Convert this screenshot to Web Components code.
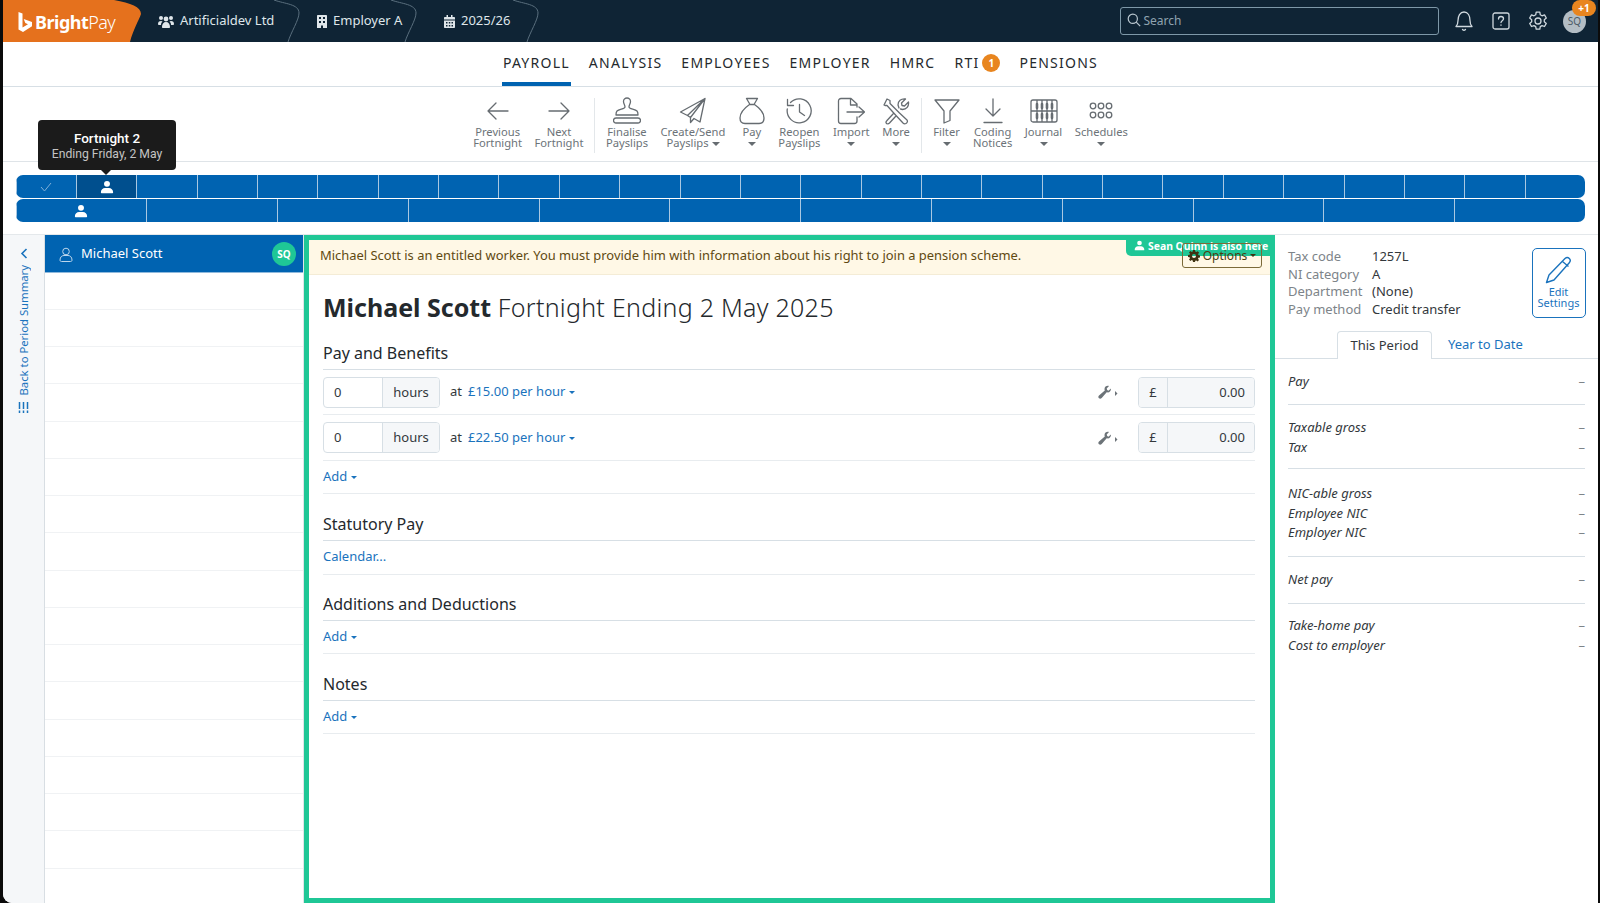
<!DOCTYPE html>
<html lang="en">
<head>
<meta charset="utf-8">
<title>BrightPay</title>
<style>
  html, body { margin: 0; height: 100%; background: #0b0b0b; overflow: hidden; }
  body { font: 13px/1.35 "Noto Sans", "Open Sans", sans-serif; color: #24292d; }
</style>
</head>
<body>

<bp-app>
  <bp-topbar></bp-topbar>
  <bp-nav>
    <bp-nav-item active>PAYROLL</bp-nav-item>
    <bp-nav-item>ANALYSIS</bp-nav-item>
    <bp-nav-item>EMPLOYEES</bp-nav-item>
    <bp-nav-item>EMPLOYER</bp-nav-item>
    <bp-nav-item>HMRC</bp-nav-item>
    <bp-nav-item>RTI<span slot="badge">1</span></bp-nav-item>
    <bp-nav-item>PENSIONS</bp-nav-item>
  </bp-nav>
  <bp-toolbar>
    <bp-tool><svg slot="icon" width="28" height="28" viewBox="0 0 28 28"><path d="M24 14H4M12 6l-8 8 8 8"/></svg>Previous<br>Fortnight</bp-tool>
    <bp-tool><svg slot="icon" width="28" height="28" viewBox="0 0 28 28"><path d="M4 14h20M16 6l8 8-8 8"/></svg>Next<br>Fortnight</bp-tool>
    <bp-tool-sep></bp-tool-sep>
    <bp-tool><svg slot="icon" width="28" height="28" viewBox="0 0 28 28"><path d="M10.500 4.500a3.500 3.500 0 0 1 7 0c0 2.500-1.500 3.500-1.500 5.500 0 2 6 2 8 4 1 1 1 3 1 4H3c0-1 0-3 1-4 2-2 8-2 8-4 0-2-1.500-3-1.500-5.500zM3 21h22a1.500 1.500 0 0 1 0 5H3a1.500 1.500 0 0 1 0-5z"/></svg>Finalise<br>Payslips</bp-tool>
    <bp-tool><svg slot="icon" width="28" height="28" viewBox="0 0 28 28"><path d="M26 1.500 1.500 15l7 3.500L26 1.500 11.500 20.500v5l3.500-4 6 3.500zM8.500 18.500l3 2"/></svg>Create/Send<br>Payslips<bp-caret inline></bp-caret></bp-tool>
    <bp-tool caret><svg slot="icon" width="28" height="28" viewBox="0 0 28 28"><path d="M8.500 1.500h11L16 7.500h-4zM11.500 7.500C6.500 11 2 16 2 21c0 3.500 2 5.500 5 5.500h14c3 0 5-2 5-5.500 0-5-4.500-10-9.500-13.500"/></svg>Pay</bp-tool>
    <bp-tool><svg slot="icon" width="28" height="28" viewBox="0 0 28 28"><path d="M5.500 5.500A12 12 0 1 1 2.300 12M2.500 2.500v6h6M14.500 7.500V15l5 3.500"/></svg>Reopen<br>Payslips</bp-tool>
    <bp-tool caret><svg slot="icon" width="28" height="28" viewBox="0 0 28 28"><path d="M20 10V7l-6-5.500H4A2.500 2.500 0 0 0 1.500 4v20A2.500 2.500 0 0 0 4 26.500h13.500A2.500 2.500 0 0 0 20 24v-4M13.500 1.500V8H20M10 15h17M22 10l5.500 5-5.500 5"/></svg>Import</bp-tool>
    <bp-tool caret><svg slot="icon" width="28" height="28" viewBox="0 0 28 28"><path d="M2 8 5 2l3 1.500v3l9.500 9.500 7.500 7c1 1.500 0 3-1 3.500-1 .5-2 .5-3-.5l-7-7.500L5 8.500H3zM11 17l-6 6.500c-1.500 1.500-1 2.500-.5 3M4.500 26.500c1 .5 2 .5 3-.5l6-6.500M17 11l-1-3c0-4 3-6.500 7.500-6L19.500 6l.5 2.500 2.500.5 4-4c.5 4.500-2 7.500-6 7.500l-2-.5"/></svg>More</bp-tool>
    <bp-tool-sep></bp-tool-sep>
    <bp-tool caret><svg slot="icon" width="28" height="28" viewBox="0 0 28 28"><path d="M2 3h24L17 14v9.500L11 26V14z"/></svg>Filter</bp-tool>
    <bp-tool><svg slot="icon" width="28" height="28" viewBox="0 0 28 28"><path d="M14 2v17M7 12l7 7 7-7M5 25.500h18"/></svg>Coding<br>Notices</bp-tool>
    <bp-tool caret><svg slot="icon" width="28" height="28" viewBox="0 0 28 28"><path d="M3 3h22a2 2 0 0 1 2 2v18a2 2 0 0 1-2 2H3a2 2 0 0 1-2-2V5a2 2 0 0 1 2-2zM1 14h26M7 3v22M12 3v22M17 3v22M22 3v22"/><path d="M7 7v4M12 7v4M17 7v4M22 7v4M7 17v4M12 17v4M17 17v4M22 17v4" stroke-width="2.600"/></svg>Journal</bp-tool>
    <bp-tool caret><svg slot="icon" width="28" height="28" viewBox="0 0 28 28"><circle cx="6" cy="9" r="2.800"/><circle cx="14" cy="9" r="2.800"/><circle cx="22" cy="9" r="2.800"/><circle cx="6" cy="18" r="2.800"/><circle cx="14" cy="18" r="2.800"/><circle cx="22" cy="18" r="2.800"/></svg>Schedules</bp-tool>
  </bp-toolbar>
  <bp-periods>
    <bp-period-row count="26" done="0" current="1"></bp-period-row>
    <bp-period-row count="12" person="0"></bp-period-row>
    <bp-tooltip><b>Fortnight 2</b><br>Ending Friday, 2 May</bp-tooltip>
  </bp-periods>
  <bp-main>
    <bp-back></bp-back>
    <bp-list></bp-list>
    <bp-content>
      <bp-alert>Michael Scott is an entitled worker. You must provide him with information about his right to join a pension scheme.</bp-alert>
      <bp-title><b>Michael Scott</b> Fortnight Ending 2 May 2025</bp-title>
      <bp-section style="--pb:10.1px">
        <span slot="title">Pay and Benefits</span>
        <bp-pay-row>£15.00 per hour</bp-pay-row>
        <bp-pay-row>£22.50 per hour</bp-pay-row>
        <bp-action>Add<bp-caret small></bp-caret></bp-action>
      </bp-section>
      <bp-section>
        <span slot="title">Statutory Pay</span>
        <bp-action>Calendar...</bp-action>
      </bp-section>
      <bp-section>
        <span slot="title">Additions and Deductions</span>
        <bp-action>Add<bp-caret small></bp-caret></bp-action>
      </bp-section>
      <bp-section>
        <span slot="title">Notes</span>
        <bp-action>Add<bp-caret small></bp-caret></bp-action>
      </bp-section>
    </bp-content>
    <bp-side>
      <bp-meta></bp-meta>
      <bp-tabs></bp-tabs>
      <bp-totals style="--pt:13px;--pb:12.3px">
        <span>Pay</span>
      </bp-totals>
      <bp-totals style="--pb:10.4px">
        <span>Taxable gross</span>
        <span>Tax</span>
      </bp-totals>
      <bp-totals style="--pt:14.7px;--pb:12.5px">
        <span>NIC-able gross</span>
        <span>Employee NIC</span>
        <span>Employer NIC</span>
      </bp-totals>
      <bp-totals style="--pb:13.5px">
        <span>Net pay</span>
      </bp-totals>
      <bp-totals last style="--pt:12px">
        <span>Take-home pay</span>
        <span>Cost to employer</span>
      </bp-totals>
    </bp-side>
  </bp-main>
</bp-app>

<script>
const USER_ICON = '<path d="M8 1a3.400 3.400 0 1 1 0 6.800A3.400 3.400 0 0 1 8 1zM1.800 15c-.6 0-.8-.4-.8-1 0-3 2.300-5 4.800-5h4.400c2.500 0 4.800 2 4.800 5 0 .6-.2 1-.8 1z"/>';
const CHEVRON = '<svg class="chev" width="28" height="42" viewBox="0 0 28 42"><path d="M1 0C12 4 26 4 26 13C26 20 18 32 15 42" fill="none" stroke="#5a6f7e"/></svg>';

function component(name, html) {
  customElements.define(name, class extends HTMLElement {
    constructor() {
      super();
      this.attachShadow({ mode: 'open' });
      this.shadowRoot.innerHTML = html;
    }
  });
}

component('bp-app', `
  <style>
    :host { display: flex; flex-direction: column; height: 903px; margin: 0 2px 0 3px; background: #fff;
            border-radius: 0 0 0 9px; overflow: hidden; }
  </style>
  <slot></slot>
`);

component('bp-topbar', `
  <style>
    :host { display: flex; align-items: center; height: 42px; flex: none; background: #0f2435; color: #dfe6ea; position: relative; }
    .logo { width: 138px; height: 42px; flex: none; position: relative; }
    .logo svg { position: absolute; left: 0; top: 0; }
    .word { position: absolute; left: 32px; top: 9px; font: 700 18px/27px "Noto Sans", sans-serif; color: #fff; letter-spacing: -.5px; }
    .word i { font-style: normal; font-weight: 300; letter-spacing: -.6px; }
    .crumb { display: flex; align-items: center; gap: 6px; height: 42px; position: relative; font-size: 13px; box-sizing: border-box; flex: none; }
    .crumb svg.chev { position: absolute; top: 0; right: 0; }
    .crumb svg.ic { fill: #dfe6ea; flex: none; }
    .c1 { width: 160px; padding-left: 17px; }
    .c2 { width: 117px; padding-left: 16px; }
    .c3 { width: 122px; padding-left: 26px; }
    .tail { flex: 1; }
    .search { width: 319px; height: 28px; box-sizing: border-box; border: 1px solid #7e98a8; border-radius: 3px;
              display: flex; align-items: center; gap: 3px; padding: 0 6px; color: #8fa3b0; font-size: 12px; margin-right: 15px; }
    .search svg { margin-top: -2px; }
    .tools { display: flex; align-items: center; gap: 18px; margin-right: 12px; }
    .tools svg { fill: none; stroke: #cfd8de; stroke-width: 1.300; stroke-linecap: round; stroke-linejoin: round; display: block; }
    .avatar { width: 23px; height: 23px; border-radius: 50%; background: #b3bdc4; color: #4b5a66; font-size: 10px; line-height: 23px;
              text-align: center; position: relative; margin-left: -2.500px; margin-top: 1px; }
    .plus { position: absolute; left: 9px; top: -10px; width: 24px; height: 16px; border-radius: 8px; background: #e8851f; color: #fff;
            font: 700 10px/16px "Noto Sans", sans-serif; }
  </style>
  <div class="logo">
    <svg width="138" height="42" viewBox="0 0 138 42">
      <path d="M0 0H111C128 3 138 7 138 14C136 20 130 30 127 42H0z" fill="#e5711d"/>
      <path d="M15.500 12l4 1.400v14.100l5.500-3.200-2.700-1.300-1.600-4 8.300 2.900v4.300L20 32l-4.500-2.500z" fill="#fff"/>
    </svg>
    <span class="word">Bright<i>Pay</i></span>
  </div>
  <div class="crumb c1">
    <svg class="ic" width="16" height="13" viewBox="0 0 16 13"><circle cx="3" cy="3" r="2"/><circle cx="13" cy="3" r="2"/><circle cx="8" cy="4" r="2.400"/><path d="M0 9c0-2 1-3 3-3 .8 0 1.200.2 1.500.6C3.500 7.500 3 8.500 3 10H.8C.3 10 0 9.600 0 9zM16 9c0-2-1-3-3-3-.8 0-1.200.2-1.500.6 1 .9 1.500 1.900 1.500 3.400h2.200c.5 0 .8-.4.8-1zM4 12c0-3 1.500-5 4-5s4 2 4 5c0 .6-.4 1-1 1H5c-.6 0-1-.4-1-1z"/></svg>
    <span>Artificialdev Ltd</span>
    ${CHEVRON}
  </div>
  <div class="crumb c2">
    <svg class="ic" width="10" height="13" viewBox="0 0 10 13"><path d="M0 1c0-.6.400-1 1-1h8c.6 0 1 .4 1 1v12H6v-2.500H4V13H0zM2 2v2h2V2zM6 2v2h2V2zM2 6v2h2V6zM6 6v2h2V6z" fill-rule="evenodd"/></svg>
    <span>Employer A</span>
    ${CHEVRON}
  </div>
  <div class="crumb c3">
    <svg class="ic" width="11" height="13" viewBox="0 0 11 13"><path d="M0 3c0-.6.400-1 1-1h1.500V0h1.500v2h3V0h1.500v2H10c.6 0 1 .4 1 1v1.500H0zM0 5.500h11V12c0 .6-.4 1-1 1H1c-.6 0-1-.4-1-1zM2 7v1.500h1.500V7zM4.800 7v1.500h1.500V7zM7.500 7v1.500H9V7zM2 10v1.500h1.500V10zM4.800 10v1.500h1.500V10zM7.500 10v1.500H9V10z" fill-rule="evenodd"/></svg>
    <span>2025/26</span>
    ${CHEVRON}
  </div>
  <div class="tail"></div>
  <div class="search">
    <svg width="14" height="14" viewBox="0 0 14 14" fill="none" stroke="#b9c6cf" stroke-width="1.200"><circle cx="5.800" cy="5.800" r="4.600"/><path d="m9.200 9.200 4 4"/></svg>
    <span>Search</span>
  </div>
  <div class="tools">
    <svg width="20" height="22" viewBox="0 0 20 22"><path d="M2 16.500c1.500-1.500 2-3 2-6C4 6 6 2 10 2s6 4 6 8.500c0 3 .5 4.500 2 6zM8.500 19.500c.8.800 2.200.8 3 0"/></svg>
    <svg width="18" height="18" viewBox="0 0 18 18"><rect x="1" y="1" width="16" height="16" rx="2"/><path d="M6.500 7c0-1.700 1.100-2.500 2.500-2.500s2.500.9 2.500 2.200c0 2-2.500 2-2.500 3.800M9 13v.3"/></svg>
    <svg width="20" height="20" viewBox="0 0 20 20"><path d="M8.200 1.200h3.600l.5 2.600 1.700 1 2.500-.9 1.800 3.100-2 1.700v2l2 1.700-1.800 3.100-2.500-.9-1.700 1-.5 2.600H8.200l-.5-2.600-1.700-1-2.500.9-1.800-3.100 2-1.700v-2l-2-1.700 1.800-3.100 2.500.9 1.700-1z"/><circle cx="10" cy="10" r="3"/></svg>
    <div class="avatar">SQ<div class="plus">+1</div></div>
  </div>
`);

component('bp-nav', `
  <style>
    :host { display: flex; justify-content: center; gap: 17px; height: 45px; flex: none; box-sizing: border-box;
            border-bottom: 1px solid #d7dfe5; }
  </style>
  <slot></slot>
`);

component('bp-nav-item', `
  <style>
    :host { display: flex; align-items: center; gap: 3px; height: 44px; box-sizing: border-box; font-size: 14px; letter-spacing: 1.250px;
            color: #24292d; padding: 0 1px 2px; }
    :host([active]) { border-bottom: 4px solid #0063b1; padding: 2px 1px 0; }
    ::slotted([slot=badge]) { width: 18px; height: 18px; border-radius: 50%; background: #e8851f; color: #fff; font: 700 10px/18px "Noto Sans", sans-serif;
            letter-spacing: 0; text-align: center; }
  </style>
  <slot></slot><slot name="badge"></slot>
`);

component('bp-toolbar', `
  <style>
    :host { display: flex; justify-content: center; height: 75px; flex: none; box-sizing: border-box; border-bottom: 1px solid #dfe4e8; padding-top: 10px; }
  </style>
  <slot></slot>
`);

component('bp-tool', `
  <style>
    :host { display: flex; flex-direction: column; align-items: center; padding: 0 6.250px; text-align: center; color: #6c7378;
            font-size: 11.200px; line-height: 11px; }
    .icon { height: 29px; }
    ::slotted(svg) { display: block; fill: none; stroke: #666c71; stroke-width: 1.300; stroke-linecap: round; stroke-linejoin: round; }
    .caret { display: none; margin-top: 5px; width: 0; height: 0; border: 4px solid transparent; border-top-color: #666c71; border-bottom: 0; }
    :host([caret]) .caret { display: block; }
  </style>
  <div class="icon"><slot name="icon"></slot></div>
  <div><slot></slot></div>
  <div class="caret"></div>
`);

component('bp-tool-sep', `
  <style>
    :host { display: block; width: 1px; height: 55px; background: #e3e7ea; margin: 1px 4.500px 0; flex: none; }
  </style>
`);

component('bp-caret', `
  <style>
    :host { display: inline-block; vertical-align: middle; margin-left: 3px; width: 0; height: 0; border: 4px solid transparent;
            border-top-color: #666c71; border-bottom: 0; }
    :host([small]) { border-width: 3px; border-bottom: 0; border-top-color: #1a73bd; margin-left: 4px; }
  </style>
`);

component('bp-periods', `
  <style>
    :host { display: flex; flex-direction: column; gap: 1px; height: 73px; flex: none; box-sizing: border-box; padding: 13px 13px 0 12.500px;
            border-bottom: 1px solid #e4e8eb; position: relative; }
  </style>
  <slot></slot>
`);

customElements.define('bp-period-row', class extends HTMLElement {
  constructor() {
    super();
    this.attachShadow({ mode: 'open' });
  }
  connectedCallback() {
    const count = +this.getAttribute('count');
    let cells = '';
    for (let i = 0; i < count; i++) {
      let cls = '', inner = '';
      if (this.getAttribute('done') == i) inner = '<svg width="12" height="10" viewBox="0 0 12 10" fill="none" stroke="#7fb0d8" stroke-width="1"><path d="m1 5 3.500 4L11 1"/></svg>';
      if (this.getAttribute('current') == i) { cls = 'cur'; inner = `<svg width="14" height="14" viewBox="0 0 16 16" fill="#fff">${USER_ICON}</svg>`; }
      if (this.getAttribute('person') == i) inner = `<svg width="14" height="14" viewBox="0 0 16 16" fill="#fff">${USER_ICON}</svg>`;
      cells += `<div class="${cls}">${inner}</div>`;
    }
    this.shadowRoot.innerHTML = `
      <style>
        :host { display: grid; grid-template-columns: repeat(${count}, 1fr); height: 23px; background: #0063b1; border-radius: 7px; overflow: hidden; }
        div { display: flex; align-items: center; justify-content: center; border-left: 1px solid #a9c8e2; }
        div:first-child { border-left: 0; }
        .cur { background: #004f8e; }
      </style>${cells}`;
  }
});

component('bp-tooltip', `
  <style>
    :host { position: absolute; left: 35px; top: -42px; width: 138px; height: 50px; box-sizing: border-box; background: #1b1b1b; border-radius: 4px;
            color: #c4c4c4; font: 12.200px/14.500px Roboto, sans-serif; text-align: center; padding-top: 11px; z-index: 3; }
    ::slotted(b) { color: #fff; font-size: 13.500px; font-weight: 500; }
    .arrow { position: absolute; left: 63px; bottom: -5px; width: 0; height: 0; border: 5px solid transparent; border-top-color: #1b1b1b; border-bottom: 0; }
  </style>
  <slot></slot><div class="arrow"></div>
`);

component('bp-main', `
  <style>
    :host { display: flex; flex: 1; min-height: 0; }
  </style>
  <slot></slot>
`);

component('bp-back', `
  <style>
    :host { width: 42px; flex: none; box-sizing: border-box; background: #f5f7f9; border-right: 1px solid #d8dee3; color: #1a73bd;
            display: flex; flex-direction: column; align-items: center; padding: 13px 1px 0 1px; font-size: 11.300px; line-height: 14px; }
    span { writing-mode: vertical-rl; transform: rotate(180deg); margin-top: 6px; white-space: nowrap; }
    svg { display: block; flex: none; }
  </style>
  <svg width="8" height="11" viewBox="0 0 8 11" fill="none" stroke="#1a73bd" stroke-width="1.600"><path d="M6.500 1 2 5.500 6.500 10"/></svg>
  <span>Back to Period Summary</span>
  <svg style="margin-top:6px" width="11" height="11" viewBox="0 0 11 11" fill="none" stroke="#1a73bd" stroke-width="1.500"><path d="M1.500 0v7M5.500 0v7M9.500 0v7M1.500 8.500V11M5.500 8.500V11M9.500 8.500V11"/></svg>
`);

customElements.define('bp-list', class extends HTMLElement {
  constructor() {
    super();
    this.attachShadow({ mode: 'open' });
    let rows = '';
    for (let i = 0; i < 17; i++) rows += '<div class="row"></div>';
    this.shadowRoot.innerHTML = `
      <style>
        :host { width: 259px; flex: none; border-right: 1px solid #dfe4e8; overflow: hidden; box-sizing: border-box; }
        .sel { height: 37.500px; background: #0063b1; color: #fff; display: flex; align-items: center; box-sizing: border-box; padding: 2px 7px 0 14px;
               border-bottom: 1px solid #8fb9dc; font-size: 13px; }
        .sel svg { margin-right: 8px; fill: none; stroke: #bcd6ec; stroke-width: 1; }
        .sel span { flex: 1; }
        .sel b { width: 24px; height: 24px; border-radius: 50%; background: #1fc796; font-size: 10px; line-height: 24px; text-align: center; }
        .row { height: 37.270px; box-sizing: border-box; border-bottom: 1px solid #f0f2f4; }
      </style>
      <div class="sel">
        <svg width="14" height="15" viewBox="0 0 14 15"><circle cx="7" cy="4.500" r="3.300"/><path d="M1 13c0-3 2-4.500 4-4.500h4c2 0 4 1.500 4 4.500 0 1-.5 1.500-1.500 1.500h-9C1.500 14.500 1 14 1 13z"/></svg>
        <span>Michael Scott</span><b>SQ</b>
      </div>${rows}`;
  }
});

component('bp-content', `
  <style>
    :host { width: 971px; flex: none; box-sizing: border-box; border: 5px solid #1fc796; position: relative; display: block; }
  </style>
  <slot></slot>
`);

component('bp-alert', `
  <style>
    :host { display: flex; align-items: center; height: 35px; box-sizing: border-box; background: #fff8e6; color: #5f4a12; padding: 0 9px 2px 11px; font-size: 12.930px;
            border-bottom: 1px solid #f4ecd6; }
    .badge { position: absolute; right: -5px; top: -5px; width: 149px; height: 21px; box-sizing: border-box; background: #1fc796; color: #fff; border-radius: 0 0 0 5px;
             font: 700 10.400px/14px "Noto Sans", sans-serif; padding: 4px 0 0 8px; display: flex; align-items: flex-start; gap: 3px; white-space: nowrap; z-index: 1; }
    .badge svg { fill: #fff; margin-top: 1px; flex: none; }
    .opt { position: absolute; right: 8px; top: 3px; width: 80px; height: 25px; box-sizing: border-box; border: 1px solid #7b6a38; border-radius: 3px; color: #4b3c10;
           font-size: 12px; line-height: 22px; display: flex; align-items: center; justify-content: center; gap: 3px; z-index: 2; }
    .opt svg { fill: #3f3312; }
    .opt i { width: 0; height: 0; border: 3px solid transparent; border-top-color: #3f3312; border-bottom: 0; }
  </style>
  <slot></slot>
  <div class="badge"><svg width="11" height="11" viewBox="0 0 16 16">${USER_ICON}</svg><span>Sean Quinn is also here</span></div>
  <div class="opt">
    <svg width="12" height="12" viewBox="0 0 12 12"><path d="M5 0h2l.3 1.600 1 .5L9.800 1.300l1.300 1.500-1 1.300.3 1 1.600.3v2l-1.600.3-.4 1 1 1.300-1.400 1.400-1.300-1-1 .4L7 12H5l-.3-1.600-1-.4-1.300 1L1 9.500l1-1.300-.4-1L0 7V5l1.600-.3.4-1L1 2.400 2.400 1l1.300 1 1-.4zM6 4a2 2 0 1 0 0 4 2 2 0 0 0 0-4z" fill-rule="evenodd"/></svg>
    <span>Options</span><i></i>
  </div>
`);

component('bp-title', `
  <style>
    :host { display: block; padding: 13px 14px 0; height: 58px; box-sizing: border-box; font-size: 25px; line-height: 38px; color: #24292d; font-weight: 300; letter-spacing: .27px; }
    ::slotted(b) { font-weight: 700; letter-spacing: 0; }
  </style>
  <slot></slot>
`);

component('bp-section', `
  <style>
    :host { display: block; margin: 0 15px 0 14px; padding-bottom: var(--pb, 9.100px); }
    .title { font-size: 16px; line-height: 22px; padding: 9px 0 5px; border-bottom: 1px solid #d7dfe5; color: #24292d; }
  </style>
  <div class="title"><slot name="title"></slot></div>
  <slot></slot>
`);

component('bp-pay-row', `
  <style>
    :host { display: flex; align-items: center; height: 45.400px; box-sizing: border-box; border-bottom: 1px solid #e8ecef; color: #1a73bd; }
    .group { display: flex; height: 31px; box-sizing: border-box; border: 1px solid #d7dfe5; border-radius: 4px; overflow: hidden; color: #33383c; line-height: 29px; }
    .val { width: 59px; padding-left: 10px; box-sizing: border-box; border-right: 1px solid #d7dfe5; }
    .add { width: 56px; text-align: center; background: #f5f7f9; }
    .at { color: #33383c; margin: 0 6px 0 10px; }
    i { display: inline-block; vertical-align: middle; margin-left: 4px; width: 0; height: 0; border: 3px solid transparent; border-top-color: #1a73bd; border-bottom: 0; }
    .fill { flex: 1; }
    svg { fill: #6c7378; margin-right: 20px; flex: none; }
    .pound { width: 28px; text-align: center; background: #f5f7f9; border-right: 1px solid #d7dfe5; }
    .amt { width: 86px; text-align: right; padding-right: 9px; box-sizing: border-box; background: #f5f7f9; }
  </style>
  <div class="group"><div class="val">0</div><div class="add">hours</div></div>
  <span class="at">at</span>
  <span><slot></slot><i></i></span>
  <div class="fill"></div>
  <svg width="20" height="14" viewBox="0 0 20 14"><path d="M13 3.500 10.400 5.800 9.200 5l-.5-1.500L11 1c-2.300-.6-4.300.6-4.500 3 0 .6.100 1 .3 1.500L1 10.600c-1 1-.7 2.100 0 2.700.8.700 1.800.7 2.700-.3l5-5.700c2.400.7 4.500-1.200 4.300-3.800z"/><path d="m17 6 2.500 2.500L17 11z"/></svg>
  <div class="group"><div class="pound">£</div><div class="amt">0.00</div></div>
`);

component('bp-action', `
  <style>
    :host { display: block; height: 33.500px; box-sizing: border-box; border-bottom: 1px solid #e8ecef; color: #1a73bd; line-height: 31px; }
  </style>
  <slot></slot>
`);

component('bp-side', `
  <style>
    :host { flex: 1; min-width: 0; display: block; }
  </style>
  <slot></slot>
`);

component('bp-meta', `
  <style>
    :host { display: flex; justify-content: space-between; padding: 13px 12.500px 0 13px; height: 96px; box-sizing: border-box; }
    dl { display: grid; grid-template-columns: 84px auto; margin: 0; line-height: 17.500px; align-content: start; }
    dt { color: #7d8489; }
    dd { margin: 0; color: #33383c; }
    .edit { width: 54px; height: 70px; box-sizing: border-box; border: 1px solid #1a73bd; border-radius: 5px; color: #1a73bd; text-align: center;
            font-size: 11px; line-height: 11px; padding-top: 7px; }
    .edit svg { display: block; margin: 0 auto 2px; fill: none; stroke: #1a73bd; stroke-width: 1.400; stroke-linejoin: round; }
  </style>
  <dl>
    <dt>Tax code</dt><dd>1257L</dd>
    <dt>NI category</dt><dd>A</dd>
    <dt>Department</dt><dd>(None)</dd>
    <dt>Pay method</dt><dd>Credit transfer</dd>
  </dl>
  <div class="edit">
    <svg width="28" height="28" viewBox="0 0 28 28"><path d="M20 2.500c1.500-1.300 3-1.300 4.300 0s1.300 2.800 0 4.300L9 24l-7.500 2.500L4 19zM17.500 5.500l6 5"/></svg>
    Edit<br>Settings
  </div>
`);

component('bp-tabs', `
  <style>
    :host { display: flex; height: 28px; box-sizing: border-box; border-bottom: 1px solid #d7dfe5; padding-left: 62px; line-height: 26px; color: #1a73bd; }
    .on { width: 95px; height: 28px; box-sizing: border-box; border: 1px solid #d7dfe5; border-bottom: 0; border-radius: 4px 4px 0 0; background: #fff; color: #33383c; text-align: center; }
    .off { padding-left: 16px; }
  </style>
  <div class="on">This Period</div>
  <div class="off">Year to Date</div>
`);

component('bp-totals', `
  <style>
    :host { display: block; margin: 0 13px; padding: var(--pt, 13.500px) 0 var(--pb, 12px); border-bottom: 1px solid #d7dfe5; font-style: italic; color: #33383c; }
    :host([last]) { border-bottom: 0; }
    ::slotted(span) { display: flex; justify-content: space-between; height: 19.700px; line-height: 19px; }
    ::slotted(span)::after { content: "–"; font-style: normal; color: #7d8489; }
  </style>
  <slot></slot>
`);
</script>
</body>
</html>
